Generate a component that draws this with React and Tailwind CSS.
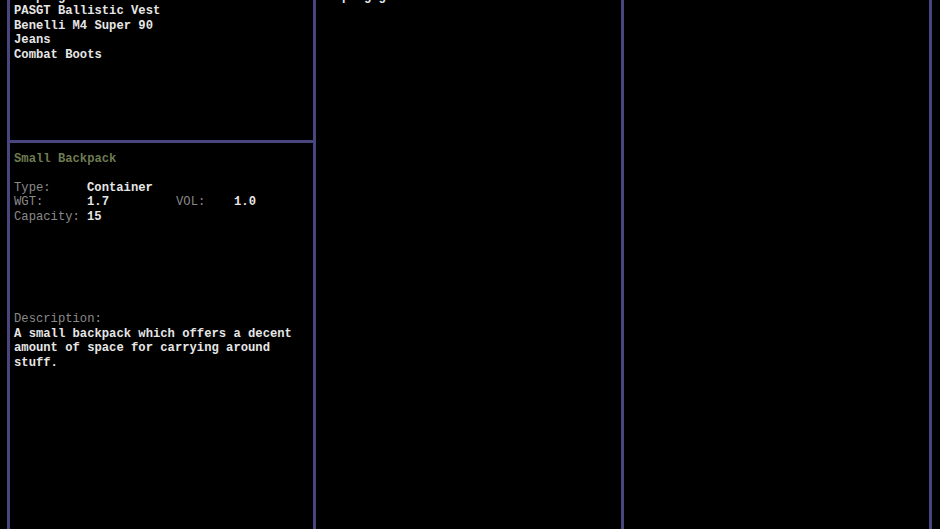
const gear = ["Camping Stove", "PASGT Ballistic Vest", "Benelli M4 Super 90", "Jeans", "Combat Boots"];

const Row = ({ label, value, label2, value2 }) => (
  <div className="flex whitespace-pre">
    <span className="w-[73px] text-[#8a8a8a] font-normal">{label}</span>
    <span className="w-[89px] text-[#e6e6e6]">{value}</span>
    {label2 && <span className="w-[58px] text-[#8a8a8a] font-normal">{label2}</span>}
    {value2 && <span className="text-[#e6e6e6]">{value2}</span>}
  </div>
);

export default function App() {
  return (
    <div
      className="w-[940px] h-[529px] bg-black overflow-hidden flex pl-[7px] text-[12.2px] leading-[14.6px] font-bold"
      style={{ fontFamily: '"Liberation Mono", "DejaVu Sans Mono", monospace' }}
    >
      <div className="w-[309px] flex flex-col border-x-[3px] border-[#48457f]">
        <div className="h-[143px] shrink-0 border-b-[3px] border-[#48457f] overflow-hidden px-1">
          <div className="-mt-[10.5px] text-[#e6e6e6]">
            {gear.map((g) => (
              <div key={g}>{g}</div>
            ))}
          </div>
        </div>
        <div className="flex-1 px-1 pt-[8.5px]">
          <div className="text-[#6e7b52]">Small Backpack</div>
          <div className="h-[14.6px]" />
          <Row label="Type:" value="Container" />
          <Row label="WGT:" value="1.7" label2="VOL:" value2="1.0" />
          <Row label="Capacity:" value="15" />
          <div className="h-[87.6px]" />
          <div className="text-[#8a8a8a] font-normal">Description:</div>
          <div className="text-[#e6e6e6] w-[290px]">
            A small backpack which offers a decent amount of space for carrying around stuff.
          </div>
        </div>
      </div>
      <div className="w-[308px] border-r-[3px] border-[#48457f] overflow-hidden px-1">
        <div className="-mt-[10.5px] flex justify-between text-[#e6e6e6]">
          <span>Camping gear</span>
          <span>1</span>
        </div>
      </div>
      <div className="w-[308px] border-r-[3px] border-[#48457f]" />
    </div>
  );
}
